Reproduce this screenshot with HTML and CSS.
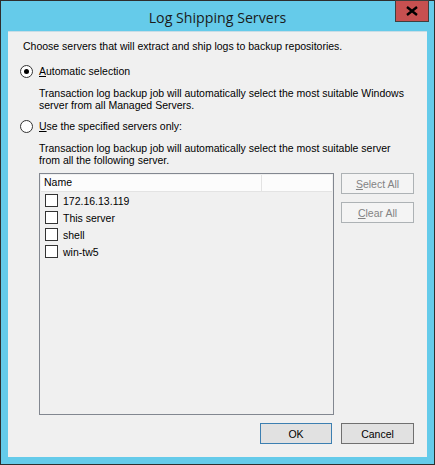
FILE: index.html
```html
<!DOCTYPE html>
<html>
<head>
<meta charset="utf-8">
<link rel="stylesheet" href="styles.css">
</head>
<body>
<div class="window">
  <div class="titlebar">
    <span class="title">Log Shipping Servers</span>
    <div class="close"><svg width="12" height="10" viewBox="0 0 12 10"><path d="M1 1 L11 9 M11 1 L1 9" stroke="#000" stroke-width="2.4" fill="none"/></svg></div>
  </div>
  <div class="client">
    <p class="intro">Choose servers that will extract and ship logs to backup repositories.</p>
    <div class="option">
      <span class="radio checked"></span>
      <span class="label"><u>A</u>utomatic selection</span>
    </div>
    <p class="desc">Transaction log backup job will automatically select the most suitable Windows<br>server from all Managed Servers.</p>
    <div class="option second">
      <span class="radio"></span>
      <span class="label"><u>U</u>se the specified servers only:</span>
    </div>
    <p class="desc">Transaction log backup job will automatically select the most suitable server<br>from all the following server.</p>
    <div class="listarea">
      <div class="list">
        <div class="header">
          <div class="col">Name</div>
          <div class="colrest"></div>
        </div>
        <div class="row"><span class="check"></span>172.16.13.119</div>
        <div class="row"><span class="check"></span>This server</div>
        <div class="row"><span class="check"></span>shell</div>
        <div class="row"><span class="check"></span>win-tw5</div>
      </div>
      <div class="sidebtns">
        <div class="btn disabled"><u>S</u>elect All</div>
        <div class="btn disabled"><u>C</u>lear All</div>
      </div>
    </div>
    <div class="footer">
      <div class="btn ok">OK</div>
      <div class="btn">Cancel</div>
    </div>
  </div>
</div>
</body>
</html>
```

FILE: styles.css
```css
html, body {
  margin: 0;
  padding: 0;
  background: #fff;
}
.window {
  position: relative;
  border: 1px solid #2e2e2e;
  background: #65cbea;
  display: flex;
  flex-direction: column;
  padding: 0 7px 7px 7px;
  box-sizing: content-box;
  width: 419px;
  height: 456px;
}
.titlebar {
  height: 30px;
  display: flex;
  align-items: center;
  justify-content: center;
  flex: none;
}
.title {
  font-family: "Open Sans", sans-serif;
  font-size: 14.2px;
  color: #1b1b1b;
  margin-top: 3px;
}
.close {
  position: absolute;
  top: -1px;
  left: 394px;
  width: 32px;
  height: 20px;
  background: #c75050;
  border: 1px solid #3f3f3f;
  display: flex;
  align-items: center;
  justify-content: center;
}
.client {
  flex: 1;
  background: #f0f0f0;
  font-family: "Liberation Sans", Arial, sans-serif;
  font-size: 10.5px;
  color: #000;
  padding: 0 13px 0 15px;
  display: flex;
  flex-direction: column;
  border-top: 1px solid #c8dde6;
  box-sizing: border-box;
  white-space: nowrap;
}
.intro {
  margin: 8px 0 0 0;
  line-height: 13px;
}
.option {
  display: flex;
  align-items: center;
  margin-top: 12px;
  height: 13px;
}
.option.second {
  margin-top: 9px;
}
.radio {
  width: 11px;
  height: 11px;
  border: 1px solid #333;
  border-radius: 50%;
  background: #fff;
  margin-left: -3px;
  margin-right: 6px;
  position: relative;
}
.radio.checked::after {
  content: "";
  position: absolute;
  left: 3px;
  top: 3px;
  width: 5px;
  height: 5px;
  border-radius: 50%;
  background: #000;
}
.label {
  line-height: 13px;
}
.desc {
  margin: 9px 0 0 16px;
  line-height: 12px;
}
.listarea {
  display: flex;
  margin-top: 7px;
  margin-left: 16px;
  gap: 7px;
}
.list {
  width: 295px;
  height: 242px;
  border: 1px solid #828790;
  background: #f0f0f0;
  box-sizing: border-box;
}
.header {
  display: flex;
  height: 16px;
  margin: 1px 1px 0 1px;
  background: #fcfcfc;
  border-bottom: 1px solid #e3e3e3;
}
.col {
  width: 221px;
  border-right: 1px solid #e3e3e3;
  padding-left: 3px;
  line-height: 15px;
  box-sizing: border-box;
}
.colrest {
  flex: 1;
}
.row {
  display: flex;
  align-items: center;
  height: 17px;
  padding-left: 5px;
}
.check {
  width: 11px;
  height: 11px;
  border: 1px solid #333;
  background: #fff;
  margin-right: 5px;
}
.sidebtns {
  display: flex;
  flex-direction: column;
  gap: 8px;
}
.btn {
  width: 73px;
  height: 21px;
  box-sizing: border-box;
  border: 1px solid #707070;
  background: #e1e1e1;
  display: flex;
  align-items: center;
  justify-content: center;
}
.btn.disabled {
  border-color: #adb2b5;
  background: #f4f4f4;
  color: #838383;
}
.btn.ok {
  border-color: #3c7fb1;
  width: 72px;
}
.footer {
  display: flex;
  justify-content: flex-end;
  gap: 9px;
  margin-top: 8px;
}
```
